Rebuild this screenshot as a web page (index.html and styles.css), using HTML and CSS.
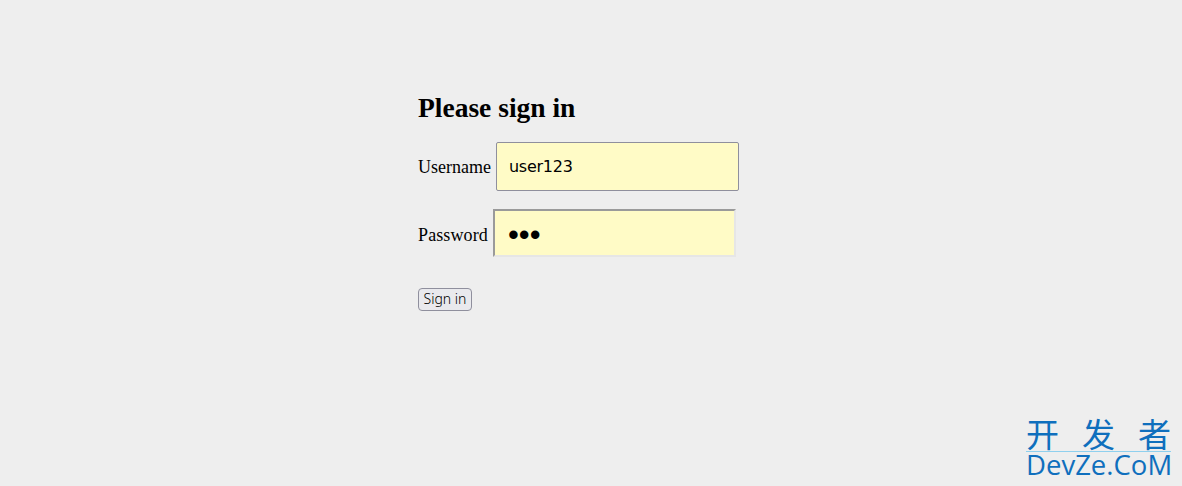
FILE: index.html
```html
<!DOCTYPE html>
<html lang="en">
<head>
<meta charset="utf-8">
<title>Please sign in</title>
<link rel="stylesheet" href="styles.css">
</head>
<body>
<main class="page">
  <form class="signin" onsubmit="return false">
    <h2 class="title">Please sign in</h2>
    <div class="row">
      <label class="label" for="u">Username</label>
      <input class="field field-user" id="u" type="text" value="user123">
    </div>
    <div class="row">
      <label class="label label-pass" for="p">Password</label>
      <input class="field field-pass" id="p" type="password" value="abc">
    </div>
    <button class="submit" type="submit">Sign in</button>
  </form>
</main>
<aside class="brand">
  <div class="brand-cn"><span>开</span><span>发</span><span>者</span></div>
  <div class="brand-en">DevZe.CoM</div>
</aside>
</body>
</html>
```
FILE: styles.css
```css
html, body {
  margin: 0;
  height: 100%;
}
body {
  background: #eeeeee;
  color: #000;
  font-family: "Liberation Serif", "Times New Roman", serif;
  position: relative;
  overflow: hidden;
}
.page {
  padding: 92px 0 0 418px;
}
.signin {
  display: flex;
  flex-direction: column;
  align-items: flex-start;
}
.title {
  margin: 0 0 19px;
  font-size: 27.5px;
  line-height: 31px;
  font-weight: bold;
}
.row {
  display: flex;
  align-items: center;
  gap: 5px;
  margin-bottom: 18px;
}
.label {
  font-size: 18px;
  line-height: 20px;
}
.label-pass {
  padding-top: 3px;
  letter-spacing: 0.12px;
}
.field {
  box-sizing: border-box;
  width: 243px;
  padding: 0 12px;
  margin: 0;
  background: #fffbc6;
  color: #000;
  font-family: "DejaVu Sans", sans-serif;
  font-size: 16px;
  letter-spacing: -0.25px;
  outline: none;
}
.field-user {
  height: 49px;
  border: 1px solid #8f8f9d;
  border-radius: 2px;
}
.field-pass {
  height: 48px;
  border: 2px solid;
  border-color: #9a9a9a #e6e6e6 #e6e6e6 #9a9a9a;
  border-radius: 0;
  padding: 3px 12px 0 13px;
  font-family: "Liberation Sans", sans-serif;
  font-size: 31px;
  letter-spacing: 0;
}
.submit {
  box-sizing: border-box;
  width: 54px;
  height: 23px;
  margin-top: 13px;
  padding: 0 0 2px;
  background: #e9e9ed;
  border: 1px solid #8f8f9d;
  border-radius: 4px;
  color: #000;
  font-family: "Noto Sans", sans-serif;
  font-size: 14px;
  font-weight: 300;
}
.brand {
  position: absolute;
  right: 11px;
  bottom: 8px;
  width: 145px;
  color: #0f6fbd;
  font-family: "Noto Sans CJK SC", "Open Sans", sans-serif;
}
.brand-cn {
  display: flex;
  justify-content: space-between;
  font-size: 33px;
  line-height: 36px;
  border-bottom: 1px solid #8fd0ee;
}
.brand-en {
  font-family: "Open Sans", sans-serif;
  font-size: 27.5px;
  line-height: 26px;
  white-space: nowrap;
}
```
